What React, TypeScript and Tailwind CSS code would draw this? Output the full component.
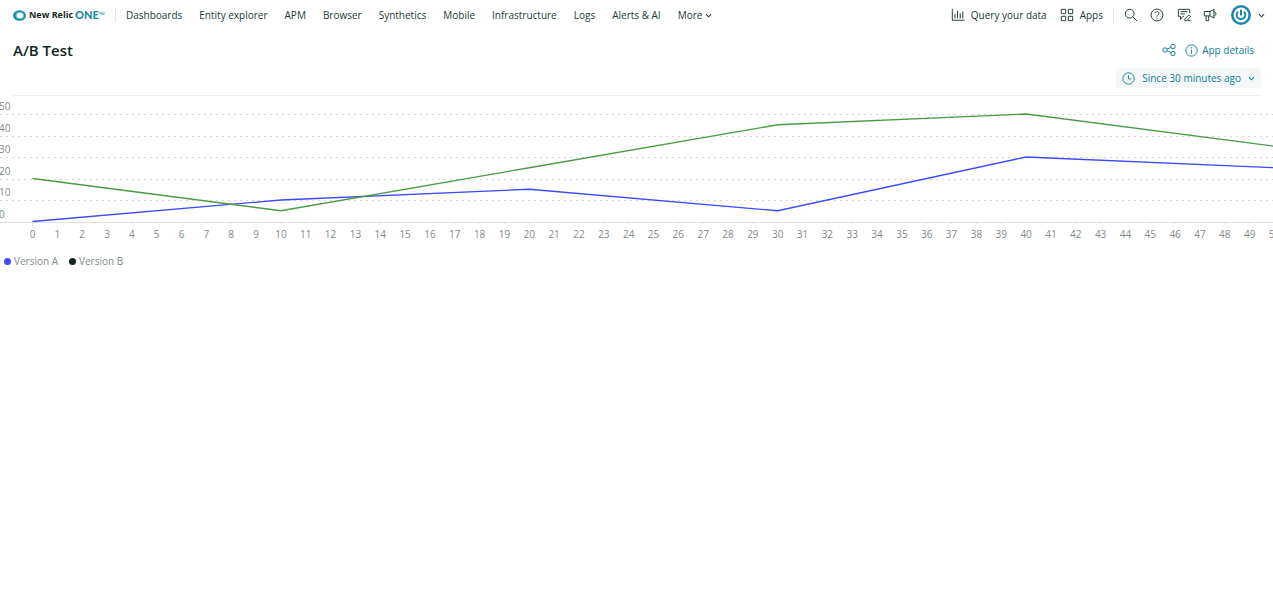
import type { ReactNode } from 'react';

const navItems = [
  'Dashboards',
  'Entity explorer',
  'APM',
  'Browser',
  'Synthetics',
  'Mobile',
  'Infrastructure',
  'Logs',
  'Alerts & AI',
];

const series = [
  {
    name: 'Version A',
    line: '#3d4bff',
    dot: 'bg-[#3d4bff]',
    points: [[0, 0], [10, 10], [20, 15], [30, 5], [40, 30], [50, 25]],
  },
  {
    name: 'Version B',
    line: '#4b9a48',
    dot: 'bg-[#12281e]',
    points: [[0, 20], [10, 5], [20, 25], [30, 45], [40, 50], [50, 35]],
  },
];

function Icon({ children, className = 'size-4' }: { children: ReactNode; className?: string }) {
  return (
    <svg
      className={className}
      viewBox="0 0 16 16"
      fill="none"
      stroke="currentColor"
      strokeWidth="1.1"
      aria-hidden="true"
    >
      {children}
    </svg>
  );
}

function Chevron() {
  return (
    <svg className="size-[7px]" viewBox="0 0 8 8" fill="none" stroke="currentColor" strokeWidth="1.2" aria-hidden="true">
      <path d="M1 2.5 4 5.5 7 2.5" />
    </svg>
  );
}

function Logo() {
  return (
    <a href="#" className="flex items-center whitespace-nowrap" aria-label="New Relic ONE">
      <svg className="w-[13px] h-[11px]" viewBox="0 0 13 11" aria-hidden="true">
        <ellipse cx="6.5" cy="5.5" rx="6.4" ry="5.3" fill="#1d87a3" />
        <ellipse cx="6.8" cy="5.4" rx="4.2" ry="3.6" fill="#70c4d5" />
        <ellipse cx="7" cy="5.5" rx="3" ry="2.5" fill="#fff" />
      </svg>
      <span className="ml-[3px] text-[9px] font-bold text-[#12281e]">New Relic</span>
      <span className="ml-[2px] font-[Lato] text-[11px] font-black text-[#1d87a3]">ONE</span>
      <span className="text-[8px] leading-3 text-[#1d87a3]">™</span>
    </a>
  );
}

function Header() {
  return (
    <header className="flex h-[30px] items-center pl-[13px] pr-2 text-[10px] text-[#203a35]">
      <Logo />
      <span className="mx-[10px] h-[13px] w-px bg-[#e3e7e7]" />
      <nav className="flex gap-[17px] whitespace-nowrap">
        {navItems.map((item) => (
          <a key={item} href="#">
            {item}
          </a>
        ))}
        <button className="flex items-center gap-[3px]">
          More
          <Chevron />
        </button>
      </nav>
      <div className="ml-auto flex items-center whitespace-nowrap">
        <button className="flex items-center gap-[6px]">
          <Icon className="size-[14px]">
            <path d="M1.5 1v13h14M4.5 7v5M7.5 3v9M10.5 6v6M13.5 4v8" />
          </Icon>
          Query your data
        </button>
        <button className="ml-[13px] flex items-center gap-[6px]">
          <Icon className="size-[14px]">
            <path d="M1.5 1.5h5v5h-5zM9.5 1.5h5v5h-5zM1.5 9.5h5v5h-5zM9.5 9.5h5v5h-5z" />
          </Icon>
          Apps
        </button>
        <span className="ml-[10px] h-[13px] w-px bg-[#e3e7e7]" />
        <button aria-label="Search" className="ml-[10px]">
          <Icon className="size-[14px]">
            <circle cx="6.5" cy="6.5" r="5" />
            <path d="M10.2 10.2 15 15" />
          </Icon>
        </button>
        <button aria-label="Help" className="ml-3">
          <Icon className="size-[14px]">
            <circle cx="8" cy="8" r="6.8" />
            <path d="M5.8 6.2C5.8 3.4 10.2 3.5 10.2 6.2 10.2 7.8 8 7.8 8 9.8M8 11v1.3" />
          </Icon>
        </button>
        <button aria-label="Feedback" className="ml-[13px]">
          <Icon className="size-[14px]">
            <path d="M14.5 6V1.5h-13v8h2.5v3.5l3-3.5h1M4 4.2h8M4 6.8h5M9 14.5v-2l4.5-4.5 2 2-4.5 4.5zM12 14.5h3.5" />
          </Icon>
        </button>
        <button aria-label="Announcements" className="ml-3">
          <Icon className="size-[14px]">
            <path d="M1.5 4H8l4.5-2.5v10L8 9H1.5zM8 4v5M3.5 9v5.5h3V9M12.5 4c3 0 3 5 0 5" />
          </Icon>
        </button>
        <button aria-label="Account" className="ml-[14px] flex items-center gap-[7px]">
          <svg className="size-5" viewBox="0 0 20 20" fill="none" aria-hidden="true">
            <circle cx="10" cy="10" r="10" fill="#1d87ad" />
            <circle cx="10" cy="10" r="7.4" fill="#fff" />
            <path d="M7 6.8a4.3 4.3 0 1 0 6 0M10 4.8V10.5" stroke="#1d87ad" strokeWidth="2" />
          </svg>
          <Chevron />
        </button>
      </div>
    </header>
  );
}

// The plot keeps its own scale and runs off the right edge on narrow windows.
const STEP = 24.84;
const toX = (v: number) => 32.5 + v * STEP;
const toY = (v: number) => 125.5 - v * 2.15;

function LineChart() {
  return (
    <figure className="overflow-hidden">
      <svg className="h-[148px] w-[1308px] max-w-none" role="img" aria-label="Version A and Version B over time">
        {[50, 40, 30, 20, 10, 0].map((v) => (
          <g key={v}>
            <line
              x1="0"
              x2="1308"
              y1={Math.round(toY(v)) + 0.5}
              y2={Math.round(toY(v)) + 0.5}
              stroke={v === 0 ? '#dde1e1' : '#d5d8d8'}
              strokeDasharray={v === 0 ? undefined : '2 4'}
            />
            <text x="-1" y={toY(v) - 4} fontSize="10" fill="#7f8a88">
              {v}
            </text>
          </g>
        ))}
        {Array.from({ length: 51 }, (_, i) => (
          <g key={i}>
            <line x1={toX(i)} x2={toX(i)} y1="126" y2={i === 0 ? 131 : 128} stroke="#dde1e1" />
            <text x={toX(i)} y="142" fontSize="10" fill="#7f8a88" textAnchor="middle">
              {i}
            </text>
          </g>
        ))}
        {series.map((s) => (
          <polyline
            key={s.name}
            points={s.points.map(([x, y]) => `${toX(x)},${toY(y)}`).join(' ')}
            fill="none"
            stroke={s.line}
            strokeWidth="1.3"
          />
        ))}
      </svg>
      <figcaption className="mt-[9px] flex gap-[11px] pl-1 text-[10px] leading-4 text-[#7f8a88]">
        {series.map((s) => (
          <span key={s.name} className="flex items-center gap-[3px]">
            <span className={`size-[7px] rounded-full ${s.dot}`} />
            {s.name}
          </span>
        ))}
      </figcaption>
    </figure>
  );
}

export default function App() {
  return (
    <div className="min-h-screen bg-white font-['Open_Sans',sans-serif]">
      <Header />
      <main>
        <div className="flex h-10 items-center justify-between pl-[13px] pr-[19px]">
          <h1 className="text-[15px] font-semibold text-[#12281e]">A/B Test</h1>
          <div className="flex items-center gap-[9px] text-[10px] text-[#0e7c93]">
            <button aria-label="Share">
              <Icon className="size-[14px]">
                <circle cx="3.5" cy="8" r="2.5" />
                <circle cx="12.5" cy="4" r="2.5" />
                <circle cx="12.5" cy="12" r="2.5" />
                <path d="M5.8 7 10.2 5M5.8 9l4.4 2" />
              </Icon>
            </button>
            <button className="flex items-center gap-1">
              <Icon className="size-[13px]">
                <circle cx="8" cy="8" r="7" />
                <path d="M8 7v5M8 4v1.5" />
              </Icon>
              App details
            </button>
          </div>
        </div>
        <div className="ml-[13px] mr-3 flex justify-end border-b border-[#edf1f1] pb-[7px]">
          <button className="-mt-[2px] flex h-5 items-center gap-[7px] rounded-sm bg-[#f3f7f7] px-[6px] text-[10px] text-[#0e7c93]">
            <Icon className="size-[13px]">
              <circle cx="8" cy="8" r="7" />
              <path d="M8 4v4.5h3.5" />
            </Icon>
            Since 30 minutes ago
            <Chevron />
          </button>
        </div>
        <LineChart />
      </main>
    </div>
  );
}
